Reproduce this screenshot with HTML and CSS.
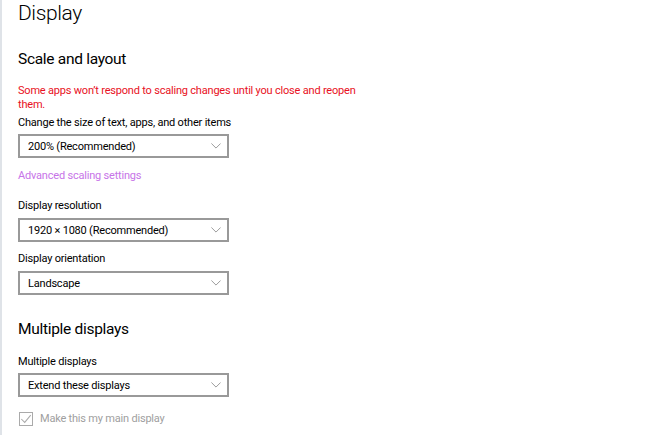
FILE: index.html
```html
<!DOCTYPE html>
<html>
<head>
<meta charset="utf-8">
<link rel="stylesheet" href="styles.css">
</head>
<body>
<div class="page">
  <h1 class="title">Display</h1>
  <h2 class="section">Scale and layout</h2>
  <p class="warning">Some apps won’t respond to scaling changes until you close and reopen them.</p>
  <div class="label l1">Change the size of text, apps, and other items</div>
  <div class="select"><span>200% (Recommended)</span><svg class="chev" viewBox="0 0 12 7" width="10" height="6"><path d="M0.5 0.5 L6 6 L11.5 0.5" fill="none" stroke="#888" stroke-width="1"/></svg></div>
  <div class="link">Advanced scaling settings</div>
  <div class="label l2">Display resolution</div>
  <div class="select"><span>1920 × 1080 (Recommended)</span><svg class="chev" viewBox="0 0 12 7" width="10" height="6"><path d="M0.5 0.5 L6 6 L11.5 0.5" fill="none" stroke="#888" stroke-width="1"/></svg></div>
  <div class="label l3">Display orientation</div>
  <div class="select"><span>Landscape</span><svg class="chev" viewBox="0 0 12 7" width="10" height="6"><path d="M0.5 0.5 L6 6 L11.5 0.5" fill="none" stroke="#888" stroke-width="1"/></svg></div>
  <h2 class="section section2">Multiple displays</h2>
  <div class="label l4">Multiple displays</div>
  <div class="select"><span>Extend these displays</span><svg class="chev" viewBox="0 0 12 7" width="10" height="6"><path d="M0.5 0.5 L6 6 L11.5 0.5" fill="none" stroke="#888" stroke-width="1"/></svg></div>
  <div class="check-row">
    <span class="box"><svg viewBox="0 0 14 14" width="12" height="12"><path d="M1.5 7 L5.5 11 L12.5 2.5" fill="none" stroke="#aaa" stroke-width="1.2"/></svg></span>
    <span class="check-text">Make this my main display</span>
  </div>
</div>
</body>
</html>
```
FILE: styles.css
```css
html, body {
  margin: 0;
  padding: 0;
  background: #fff;
}
body {
  font-family: "Roboto", "Open Sans", sans-serif;
  color: #000;
  height: 435px;
  overflow: hidden;
  border-left: 2px solid #dfe3e8;
  box-sizing: border-box;
}
.page {
  padding-left: 16px;
}
.title {
  margin: -1px 0 0;
  font-size: 21px;
  font-weight: 300;
  line-height: 28px;
  letter-spacing: -0.4px;
}
.section {
  margin: 22px 0 0;
  font-size: 15.5px;
  font-weight: 400;
  line-height: 20px;
  letter-spacing: -0.3px;
}
.section2 {
  margin-top: 24px;
}
.warning {
  margin: 15px 0 0;
  width: 350px;
  font-size: 11px;
  line-height: 14px;
  letter-spacing: -0.2px;
  color: #e81123;
}
.label {
  font-size: 11px;
  line-height: 16px;
  letter-spacing: -0.2px;
}
.l1 { margin-top: 3px; }
.l2 { margin-top: 14px; }
.l3 { margin-top: 9px; }
.l4 { margin-top: 15px; }
.select {
  margin-top: 3px;
  width: 211px;
  height: 24px;
  box-sizing: border-box;
  border: 2px solid #999;
  display: flex;
  align-items: center;
  justify-content: space-between;
  padding: 0 6px 0 8px;
  font-size: 11px;
  letter-spacing: -0.2px;
}
.l2 + .select, .l3 + .select { margin-top: 4px; }
.chev {
  display: block;
}
.link {
  margin-top: 10px;
  font-size: 11px;
  line-height: 16px;
  letter-spacing: -0.2px;
  color: #c774e8;
}
.check-row {
  margin-top: 14px;
  display: flex;
  align-items: center;
  gap: 7px;
  padding-left: 1px;
}
.box {
  width: 14px;
  height: 14px;
  box-sizing: border-box;
  border: 1px solid #aaa;
  display: flex;
  align-items: center;
  justify-content: center;
}
.box svg { display: block; }
.check-text {
  font-size: 11px;
  line-height: 16px;
  letter-spacing: -0.2px;
  color: #a0a0a0;
}
```
